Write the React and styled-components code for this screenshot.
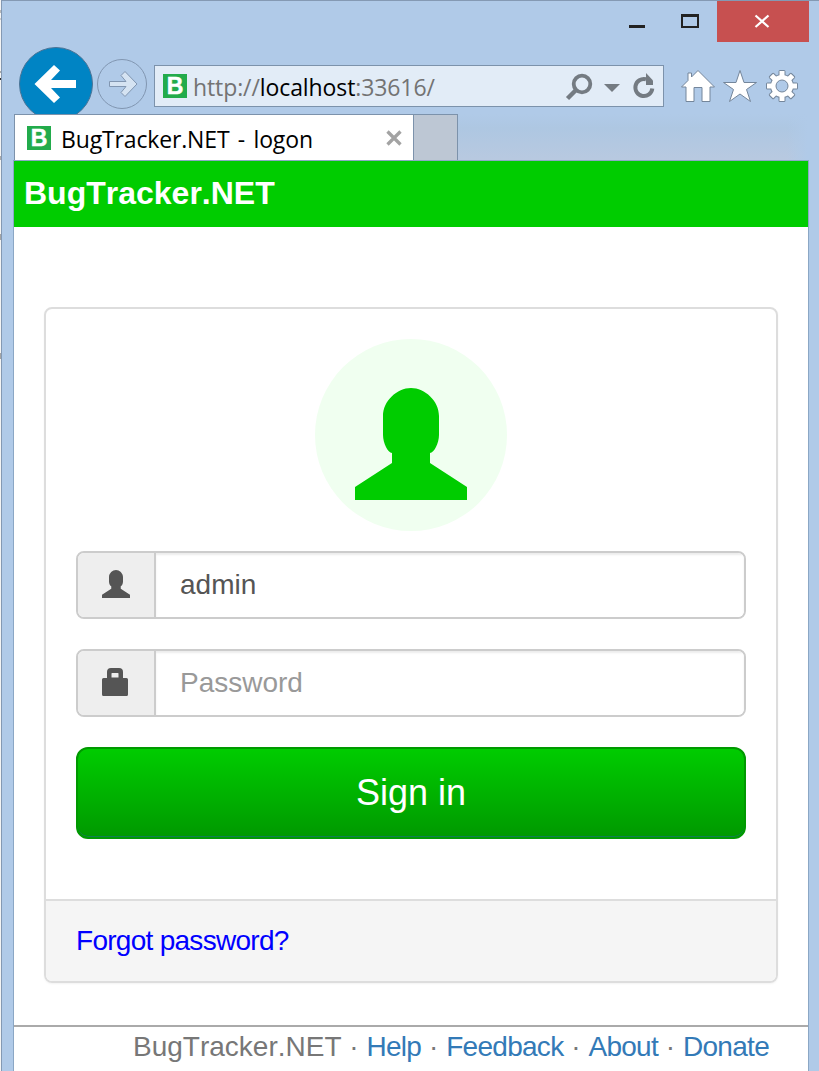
import React from "react";
import styled, { createGlobalStyle } from "styled-components";

const GlobalStyle = createGlobalStyle`
  * { box-sizing: border-box; }
  body {
    margin: 0;
    height: 1071px;
    overflow: hidden;
    background: #f4f4f4;
    font-family: "Liberation Sans", Arial, sans-serif;
    font-kerning: none;
  }
`;

const Desktop = styled.div`
  height: 1071px;
  padding-left: 1px;
  background: linear-gradient(#f4f4f4 0 10px, #b8b8b8 10px 13px, #f4f4f4 13px 18px, #ccc 18px 20px,
    #f4f4f4 20px 71px, #aaa 71px 73px, #f4f4f4 73px 78px, #333 78px 80px, #f4f4f4 80px 156px,
    #aaa 156px 160px, #f4f4f4 160px 234px, #a4a4a4 234px 240px, #f4f4f4 240px 353px,
    #a4a4a4 353px 359px, #f4f4f4 359px);
`;

const Window = styled.div`
  display: flex;
  flex-direction: column;
  height: 1071px;
  border: 1px solid #8499b3;
  border-width: 1px 0 0 1px;
  background: #b0cae8;
`;

const TitleBar = styled.div`
  display: flex;
  justify-content: flex-end;
  height: 41px;
  padding-right: 10px;
  flex: none;
`;

const Caption = styled.div`
  width: ${(p) => p.$width}px;
  height: 41px;
  background: ${(p) => (p.$close ? "#c75050" : "transparent")};
  svg { display: block; }
`;

const NavRow = styled.div`
  display: flex;
  align-items: flex-start;
  height: 72px;
  padding-left: 17px;
  overflow: hidden;
  flex: none;
`;

const RoundButton = styled.div`
  flex: none;
  width: ${(p) => p.$size}px;
  height: ${(p) => p.$size}px;
  margin: ${(p) => p.$margin};
  border: 1px solid ${(p) => (p.$primary ? "#4c7496" : "#8196b1")};
  border-radius: 50%;
  background: ${(p) => (p.$primary ? "#0084c4" : "transparent")};
  svg { display: block; }
`;

const AddressBar = styled.div`
  display: flex;
  align-items: center;
  width: 510px;
  height: 42px;
  margin-top: 23px;
  padding-left: 8px;
  border: 1px solid #7c92ab;
  background: #e2ecf7;
  flex: none;
`;

const Url = styled.div`
  flex: 1;
  margin-left: 6px;
  padding-top: 1px;
  font: 23px/30px "Open Sans", sans-serif;
  letter-spacing: -0.1px;
  color: #737373;
  white-space: nowrap;
  b { font-weight: 400; color: #000; }
`;

const AddressTools = styled.svg`
  flex: none;
  width: 103px;
  height: 40px;
`;

const Favicon = styled.div`
  flex: none;
  width: 24px;
  height: 24px;
  background: #22ab4b;
  color: #fff;
  font: bold 23px/25px "Liberation Sans", Arial, sans-serif;
  -webkit-text-stroke: 0.5px #fff;
  text-align: center;
`;

const Tools = styled.svg`
  flex: none;
  width: 130px;
  height: 40px;
  margin: 25px 0 0 10px;
  fill: #fff;
  stroke: #74869b;
  stroke-width: 1;
`;

const TabRow = styled.div`
  display: flex;
  height: 46px;
  padding: 0 11px 0 12px;
  flex: none;
`;

const TabShade = styled.div`
  flex: 1;
  background: linear-gradient(90deg, transparent 94%, #b0cae8 100%),
    linear-gradient(#b0cae8, #aec7e2 30%, #b8c9e0);
`;

const Tab = styled.div`
  display: flex;
  align-items: center;
  width: 400px;
  border: 1px solid #7c92ab;
  border-bottom: 0;
  padding: 0 11px 0 12px;
  background: #fff;
`;

const TabTitle = styled.div`
  flex: 1;
  margin-left: 10px;
  padding-top: 3px;
  font: 23px/30px "Open Sans", sans-serif;
  letter-spacing: -0.15px;
  word-spacing: 2.6px;
  color: #000;
  white-space: nowrap;
`;

const NewTab = styled.div`
  width: 44px;
  border: 1px solid #7c92ab;
  border-width: 1px 1px 0 0;
  background: #bdc7d4;
`;

const Page = styled.div`
  flex: 1;
  display: flex;
  flex-direction: column;
  margin: 0 10px 0 11px;
  border: 1px solid #8ba7c5;
  border-bottom: 0;
  background: #fff;
  min-height: 0;
`;

const Banner = styled.header`
  height: 66px;
  padding-left: 10px;
  background: #00cc00;
  color: #fff;
  font-size: 32px;
  font-weight: bold;
  line-height: 64px;
`;

const Card = styled.form`
  height: 676px;
  margin: 80px 30px 0;
  border: 2px solid #ddd;
  border-radius: 8px;
  box-shadow: 0 1px 2px rgba(0, 0, 0, 0.05);
  overflow: hidden;
  display: flex;
  flex-direction: column;
`;

const CardBody = styled.div`
  flex: 1;
  padding: 30px 30px 0;
`;

const Avatar = styled.div`
  display: flex;
  justify-content: center;
  width: 192px;
  height: 192px;
  margin: 0 auto 20px;
  padding-top: 49px;
  border-radius: 50%;
  background: #f0fff0;
  color: #00cc00;
`;

const Field = styled.label`
  display: flex;
  height: 68px;
  margin-bottom: 30px;
  border: 2px solid #ccc;
  border-radius: 8px;
  overflow: hidden;
`;

const Addon = styled.span`
  display: flex;
  align-items: center;
  width: 78px;
  padding: 0 0 2px 24px;
  border-right: 2px solid #ccc;
  background: #eee;
  color: #555;
`;

const Input = styled.input`
  flex: 1;
  min-width: 0;
  padding: 0 24px;
  border: 0;
  outline: 0;
  background: #fff;
  box-shadow: inset 0 2px 2px rgba(0, 0, 0, 0.075);
  color: #555;
  font: 28px "Liberation Sans", Arial, sans-serif;
  &::placeholder { color: #999; opacity: 1; }
`;

const SignIn = styled.button`
  display: block;
  width: 100%;
  height: 92px;
  padding: 0;
  border: 2px solid #009900;
  border-radius: 12px;
  background: linear-gradient(#00cc00, #009900);
  box-shadow: inset 0 -1px 0 #107f50;
  color: #fff;
  font: 36px "Liberation Sans", Arial, sans-serif;
`;

const CardFooter = styled.div`
  height: 82px;
  padding-left: 30px;
  border-top: 2px solid #ddd;
  background: #f5f5f5;
  font-size: 28px;
  letter-spacing: -0.72px;
  line-height: 80px;
  a { color: #0000ff; text-decoration: none; }
`;

const SiteFooter = styled.footer`
  display: flex;
  justify-content: flex-end;
  height: 46px;
  margin-top: 42px;
  padding-right: 39px;
  border-top: 2px solid #aaa;
  color: #777;
  font-size: 28px;
  line-height: 40px;
  white-space: pre;
`;

const FooterLink = styled.a`
  color: #337ab7;
  letter-spacing: -0.72px;
`;

const Dot = styled.span`
  width: 25px;
  text-align: center;
`;

const UserIcon = ({ size }) => (
  <svg width={size} height={size} viewBox="0 0 112 112" fill="currentColor">
    <path d="M28 28C28 13 42 0 56 0S84 13 84 28V47C84 55 79 65 75 65V75L112 99V112H0V99L37 75V65C33 65 28 55 28 47Z" />
  </svg>
);

const LockIcon = () => (
  <svg width="28" height="28" viewBox="0 0 28 28" fill="currentColor">
    <path fillRule="evenodd" d="M5 10V4Q5 0 9 0H17Q21 0 21 4V10H24.5Q26 10 26 11.5V26.5Q26 28 24.5 28H1.5Q0 28 0 26.5V11.5Q0 10 1.5 10ZM9.500 9.500H16.500V5.500Q16.500 5 16 5H10Q9.500 5 9.500 5.500Z" />
  </svg>
);

const links = ["Help", "Feedback", "About", "Donate"];

const gearTeeth = [0, 45, 90, 135, 180, 225, 270, 315];

export default function App() {
  return (
    <Desktop>
      <GlobalStyle />
      <Window>
        <TitleBar>
          <Caption $width={52}>
            <svg width="52" height="41"><path d="M16 24h16v3h-16z" fill="#222" /></svg>
          </Caption>
          <Caption $width={52}>
            <svg width="52" height="41"><path fillRule="evenodd" d="M16 13h18v14h-18zM18 16v9h14v-9z" fill="#222" /></svg>
          </Caption>
          <Caption $width={92} $close>
            <svg width="92" height="41"><path d="M38.5 14.5l13 11.5M51.5 14.5l-13 11.5" stroke="#fff" strokeWidth="2.2" /></svg>
          </Caption>
        </TitleBar>
        <NavRow>
          <RoundButton $size={74} $margin="5px 4px 0 0" $primary>
            <svg width="72" height="72"><path d="M56 32H31L40 22.500L34 17L14.500 36L34 55L40 49.500L31 40H56Z" fill="#fff" /></svg>
          </RoundButton>
          <RoundButton $size={50} $margin="17px 7px 0 0">
            <svg width="48" height="48"><path d="M11.500 21.500V26.500H28L23 32.500L27 36.500L39 24L27 11.500L23 15.500L28 21.500Z" fill="#d5e3f2" stroke="#8196b1" /></svg>
          </RoundButton>
          <AddressBar>
            <Favicon>B</Favicon>
            <Url>http://<b>localhost</b>:33616/</Url>
            <AddressTools viewBox="560 66 103 40">
              <circle cx="582" cy="84" r="8.300" fill="none" stroke="#747b82" strokeWidth="3.800" />
              <path d="M576 90L567.500 98.500" stroke="#747b82" strokeWidth="4.500" />
              <path d="M604 84H620L612 92Z" fill="#747b82" />
              <path d="M646 79.300A8.500 8.500 0 1 0 652.300 88.500" fill="none" stroke="#747b82" strokeWidth="4" />
              <path d="M646 73L653 80.500V85H646Z" fill="#747b82" />
            </AddressTools>
          </AddressBar>
          <Tools viewBox="674 67 130 40">
            <path d="M681.500 87L688 80.500V73H691.500V77L698 70.500L714.500 87H710V101.500H702V87.500H694V101.500H686V87Z" />
            <path d="M740 70.500L744 82.500H756.500L746.500 89.500L750.500 101.500L740 94L729.500 101.500L733.500 89.500L723.500 82.500H736Z" />
            <g strokeWidth="2">
              {gearTeeth.map((a) => (
                <rect key={a} x="779.500" y="71" width="5" height="8" rx=".5" transform={`rotate(${a} 782 86)`} />
              ))}
              <circle cx="782" cy="86" r="11" />
            </g>
            <g stroke="none">
              {gearTeeth.map((a) => (
                <rect key={a} x="779.500" y="71" width="5" height="8" transform={`rotate(${a} 782 86)`} />
              ))}
              <circle cx="782" cy="86" r="11" />
            </g>
            <circle cx="782" cy="86" r="6" fill="#b0cae8" />
          </Tools>
        </NavRow>
        <TabRow>
          <Tab>
            <Favicon>B</Favicon>
            <TabTitle>BugTracker.NET - logon</TabTitle>
            <svg width="16" height="16"><path d="M1.500 1.500L14.500 14.500M14.500 1.500L1.500 14.500" stroke="#a3a3a3" strokeWidth="3.300" /></svg>
          </Tab>
          <NewTab />
          <TabShade />
        </TabRow>
        <Page>
          <Banner>BugTracker.NET</Banner>
          <Card>
            <CardBody>
              <Avatar><UserIcon size={112} /></Avatar>
              <Field>
                <Addon><UserIcon size={28} /></Addon>
                <Input defaultValue="admin" />
              </Field>
              <Field>
                <Addon><LockIcon /></Addon>
                <Input type="password" placeholder="Password" />
              </Field>
              <SignIn type="button">Sign in</SignIn>
            </CardBody>
            <CardFooter><a href="#forgot">Forgot password?</a></CardFooter>
          </Card>
          <SiteFooter>
            <span>BugTracker.NET</span>
            {links.map((name) => (
              <React.Fragment key={name}>
                <Dot>·</Dot>
                <FooterLink>{name}</FooterLink>
              </React.Fragment>
            ))}
          </SiteFooter>
        </Page>
      </Window>
    </Desktop>
  );
}
